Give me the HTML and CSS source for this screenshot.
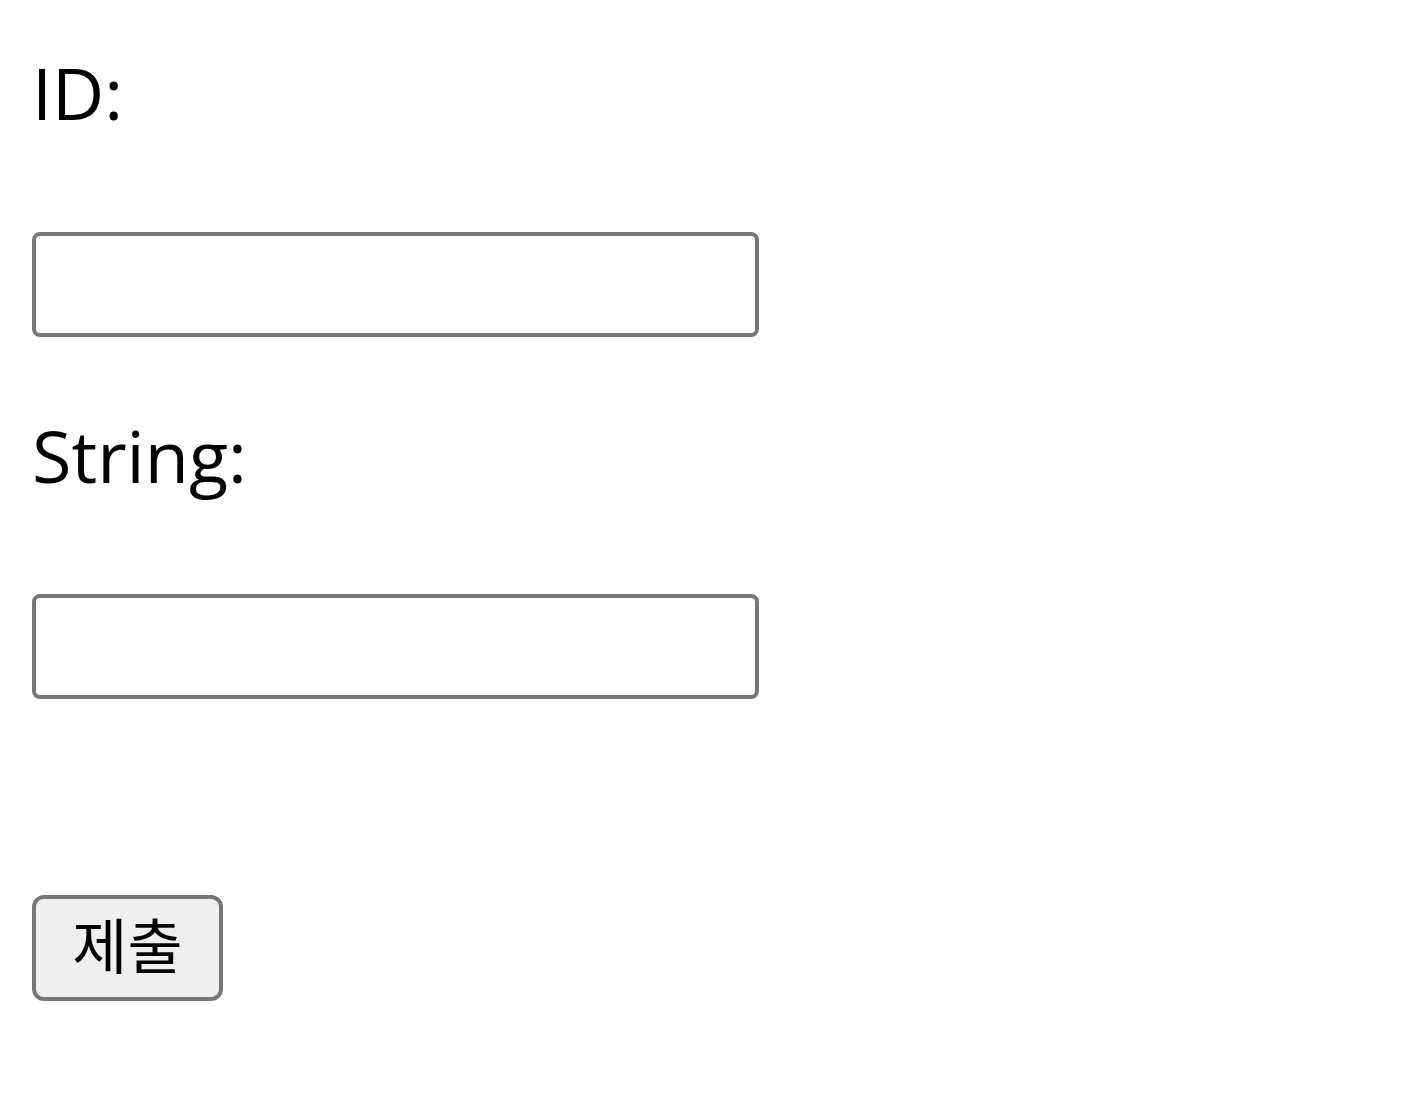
FILE: index.html
```html
<!DOCTYPE html>
<html lang="ko">
<head>
    <meta charset="UTF-8">
    <meta name="viewport" content="width=device-width, initial-scale=1.0">
    <title>제출</title>
    <link rel="stylesheet" href="styles.css">
</head>
<body>
    <form class="form" id="mainForm">
        <!-- ID 입력 -->
        <label class="field-label" for="idInput">ID:</label>
        <input class="field-input" type="text" id="idInput" name="id">
        <!-- 문자열 입력 -->
        <label class="field-label second" for="strInput">String:</label>
        <input class="field-input" type="text" id="strInput" name="string">
        <button type="submit" class="submit-btn">제출</button>
    </form>
</body>
</html>
```

FILE: styles.css
```css
/* 전체 */
body {
    margin: 0;
    padding: 43px 32px;
    background: #fff;
    color: #000;
    font-family: 'Open Sans', 'Noto Sans CJK KR', sans-serif;
}
.form {
    display: flex;
    flex-direction: column;
    align-items: flex-start;
}
/* 라벨 */
.field-label {
    font-size: 72px;
    line-height: 98px;
    margin-bottom: 91px;
}
.field-label.second {
    margin-top: 69px;
    margin-bottom: 90px;
}
/* 입력창 */
.field-input {
    box-sizing: border-box;
    width: 727px;
    height: 105px;
    margin: 0;
    padding: 4px 8px;
    border: 4px solid #767676;
    border-radius: 8px;
    background: #fff;
    font-size: 52px;
}
/* 제출 버튼 */
.submit-btn {
    box-sizing: border-box;
    margin-top: 196px;
    width: 191px;
    height: 106px;
    padding: 0 0 10px;
    border: 4px solid #767676;
    border-radius: 12px;
    background: #efefef;
    color: #000;
    font-family: 'Noto Sans CJK KR', sans-serif;
    font-size: 60px;
    line-height: 1;
}
```
